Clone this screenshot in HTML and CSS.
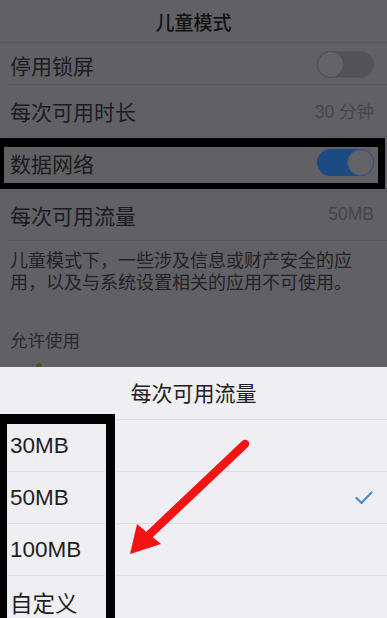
FILE: index.html
```html
<!DOCTYPE html>
<html lang="zh">
<head>
<meta charset="utf-8">
<title>儿童模式</title>
<link rel="stylesheet" href="styles.css">
</head>
<body>
<div class="screen">
  <div class="settings">
    <div class="header">儿童模式</div>
    <div class="row row-first">
      <span class="label">停用锁屏</span>
      <span class="toggle off"><span class="knob"></span></span>
    </div>
    <div class="row">
      <span class="label">每次可用时长</span>
      <span class="value">30 分钟</span>
    </div>
    <div class="row">
      <span class="label">数据网络</span>
      <span class="toggle on"><span class="knob"></span></span>
    </div>
    <div class="row">
      <span class="label">每次可用流量</span>
      <span class="value">50MB</span>
    </div>
    <p class="desc">儿童模式下，一些涉及信息或财产安全的应用，以及与系统设置相关的应用不可使用。</p>
    <div class="section">允许使用</div>
    <div class="app-peek"></div>
  </div>
  <div class="sheet">
    <div class="sheet-title">每次可用流量</div>
    <div class="option">30MB</div>
    <div class="option">50MB
      <svg class="check" width="18" height="14" viewBox="0 0 18 14"><polyline points="1.5,7 6.5,12 16.5,1.5" fill="none" stroke="#4a8fcc" stroke-width="2.2" stroke-linecap="round" stroke-linejoin="round"/></svg>
    </div>
    <div class="option">100MB</div>
    <div class="option">自定义</div>
  </div>
  <div class="mark mark-network"></div>
  <div class="mark mark-options"></div>
  <svg class="arrow" width="387" height="618" viewBox="0 0 387 618">
    <line x1="245" y1="444" x2="150" y2="534" stroke="#f21414" stroke-width="8.5" stroke-linecap="round"/>
    <polygon points="130,554 137,524 161,544" fill="#f21414"/>
  </svg>
</div>
</body>
</html>
```
FILE: styles.css
```css
* { box-sizing: border-box; }
html, body {
  margin: 0;
  padding: 0;
}
body {
  width: 387px;
  height: 618px;
  overflow: hidden;
  background: #616064;
  font-family: "Liberation Sans", "Noto Sans CJK SC", sans-serif;
}
.screen {
  position: relative;
  width: 387px;
  height: 618px;
  display: flex;
  flex-direction: column;
}
.settings {
  height: 367px;
  flex: none;
  overflow: hidden;
  background: #616064;
  color: #1d1d1f;
}
.header {
  height: 43px;
  display: flex;
  align-items: center;
  justify-content: center;
  font-size: 19px;
  font-weight: 500;
  color: #121213;
  border-bottom: 1px solid #59585c;
}
.row {
  height: 52px;
  margin-left: 8px;
  padding: 0 13px 0 2px;
  display: flex;
  align-items: center;
  justify-content: space-between;
  border-bottom: 1px solid #59585c;
}
.row-first {
  height: 42px;
  padding-top: 2px;
}
.label {
  font-size: 21px;
  color: #1c1c1e;
}
.value {
  font-size: 17.5px;
  color: #464548;
}
.toggle {
  position: relative;
  width: 57px;
  height: 27px;
  border-radius: 14px;
  display: block;
}
.toggle.off {
  background: #535256;
  border: 1px solid #58575b;
}
.toggle.on {
  background: #1b4b80;
}
.knob {
  position: absolute;
  top: 0;
  width: 27px;
  height: 27px;
  border-radius: 50%;
  background: #646367;
  border: 1px solid #4f4e52;
}
.toggle.off .knob { left: -1px; top: -1px; }
.toggle.on .knob { right: 0; background: #636266; border-color: #2f5a89; }
.desc {
  margin: 0;
  padding: 9px 34px 0 10px;
  font-size: 18px;
  line-height: 22px;
  color: #232325;
}
.section {
  margin-top: 33px;
  padding-left: 10px;
  font-size: 17.5px;
  color: #2a2a2c;
}
.app-peek {
  margin: 11px 0 0 36px;
  width: 6px;
  height: 4px;
  border-radius: 3px 3px 0 0;
  background: #3f5a2a;
}
.sheet {
  flex: 1;
  background: #efeef2;
  color: #1f1f21;
}
.sheet-title {
  height: 52px;
  display: flex;
  align-items: center;
  justify-content: center;
  font-size: 21px;
  color: #202022;
  padding-bottom: 2px;
}
.option {
  height: 52px;
  border-top: 1px solid #dedde2;
  display: flex;
  align-items: center;
  justify-content: space-between;
  padding: 0 14px 0 10px;
  font-size: 22.5px;
  color: #1f1f21;
}
.check { display: block; }
.mark {
  position: absolute;
  border-style: solid;
  border-color: #000;
  pointer-events: none;
}
.mark-network {
  left: 0;
  top: 138px;
  width: 385px;
  height: 51px;
  border-width: 9px 7px 6px 4px;
}
.mark-options {
  left: 0;
  top: 414px;
  width: 115px;
  height: 210px;
  border-width: 10px 9px 0 7px;
}
.arrow {
  position: absolute;
  left: 0;
  top: 0;
  pointer-events: none;
}
```
